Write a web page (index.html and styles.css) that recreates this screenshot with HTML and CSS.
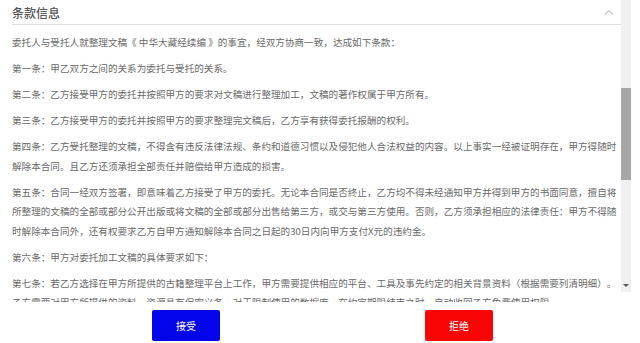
FILE: index.html
```
<!DOCTYPE html>
<html lang="zh-CN">
  <head>
    <meta charset="utf-8">
    <link rel="stylesheet" href="styles.css">
    <title>条款信息</title>
  </head>
  <body>
    <!-- terms box -->
    <div class="panel">
      <div class="content">
        <div class="head">
          <span class="head_title">条款信息</span>
          <svg class="arrow_up" width="10" height="6" viewBox="0 0 10 6">
            <polyline points="1,5.5 5,1.5 9,5.5" fill="none" stroke="#a0a0a0" stroke-width="1"/>
          </svg>
        </div>
        <div class="terms">
          <p>委托人与受托人就整理文稿《 中华大藏经续编 》的事宜，经双方协商一致，达成如下条款：</p>
          <p>第一条：甲乙双方之间的关系为委托与受托的关系。</p>
          <p>第二条：乙方接受甲方的委托并按照甲方的要求对文稿进行整理加工，文稿的著作权属于甲方所有。</p>
          <p>第三条：乙方接受甲方的委托并按照甲方的要求整理完文稿后，乙方享有获得委托报酬的权利。</p>
          <p>第四条：乙方受托整理的文稿，不得含有违反法律法规、条约和道德习惯以及侵犯他人合法权益的内容。以上事实一经被证明存在，甲方得随时解除本合同。且乙方还须承担全部责任并赔偿给甲方造成的损害。</p>
          <p>第五条：合同一经双方签署，即意味着乙方接受了甲方的委托。无论本合同是否终止，乙方均不得未经通知甲方并得到甲方的书面同意，擅自将所整理的文稿的全部或部分公开出版或将文稿的全部或部分出售给第三方，或交与第三方使用。否则，乙方须承担相应的法律责任：甲方不得随时解除本合同外，还有权要求乙方自甲方通知解除本合同之日起的30日内向甲方支付X元的违约金。</p>
          <p>第六条：甲方对委托加工文稿的具体要求如下：</p>
          <p>第七条：若乙方选择在甲方所提供的古籍整理平台上工作，甲方需要提供相应的平台、工具及事先约定的相关背景资料（根据需要列清明细）。乙方需要对甲方所提供的资料、资源具有保密义务，对于限制使用的数据库，在约定期限结束之时，自动收回乙方免费使用权限。</p>
          <p>第八条：乙方完成整理工作后，应按约定的时间与格式向甲方交付文稿。</p>
        </div>
      </div>
      <div class="scrollbar">
        <div class="thumb"></div>
        <div class="down"></div>
      </div>
    </div>
    <!-- buttons -->
    <div class="actions">
      <button class="btn accept">接受</button>
      <button class="btn refuse">拒绝</button>
    </div>
  </body>
</html>
```

FILE: styles.css
```
body{
  margin: 0;
  background: #fff;
  color: #6a6a6a;
  font-family: "Noto Sans CJK SC", "Liberation Sans", sans-serif;
}
.panel{
  display: flex;
  height: 302px;
  overflow: hidden;
}
.content{
  flex: 1;
  min-width: 0;
  padding-left: 12px;
}
.head{
  box-sizing: border-box;
  height: 25px;
  display: flex;
  align-items: center;
  justify-content: space-between;
  padding-right: 7px;
  border-bottom: 1px solid #dedede;
}
.head_title{
  font-size: 12px;
  font-weight: 500;
  color: #555;
}
.terms{
  padding-top: 8px;
  font-size: 9.6px;
  line-height: 19.5px;
  text-spacing-trim: space-all;
}
.terms p{
  margin: 0 0 6.5px;
}
.scrollbar{
  width: 10px;
  height: 292px;
  margin-right: 9px;
  background: #f0f0f2;
  display: flex;
  flex-direction: column;
  align-items: center;
}
.thumb{
  align-self: stretch;
  margin-top: 88px;
  height: 92px;
  background: #a6a6a6;
}
.down{
  margin-top: auto;
  margin-bottom: 5px;
  width: 0;
  height: 0;
  border-left: 3px solid transparent;
  border-right: 3px solid transparent;
  border-top: 3px solid #555;
}
.actions{
  display: flex;
  justify-content: center;
  gap: 205px;
  padding: 8px 0 0 5px;
}
.btn{
  width: 68px;
  height: 31px;
  padding: 0;
  border: none;
  border-radius: 2px;
  color: #fff;
  font-size: 10px;
  line-height: 31px;
  font-family: inherit;
}
.accept{
  background: #0404ea;
}
.refuse{
  background: #fa0505;
}
```
